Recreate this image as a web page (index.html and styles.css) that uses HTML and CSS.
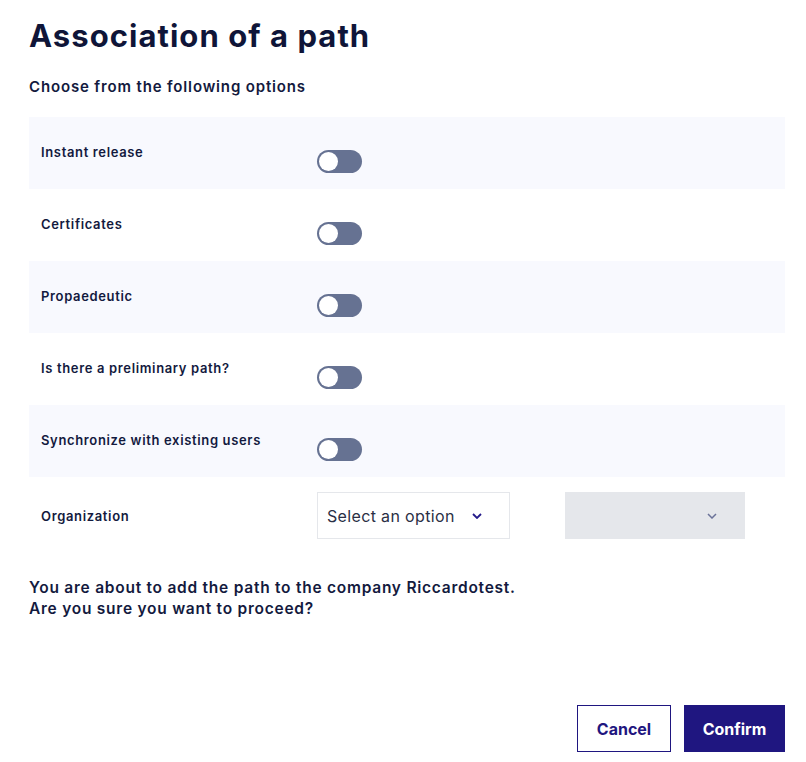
FILE: index.html
```html
<!DOCTYPE html>
<html>
<head>
<meta charset="utf-8">
<link rel="stylesheet" href="styles.css">
</head>
<body>
<div class="modal">
  <h1 class="title">Association of a path</h1>
  <p class="subtitle">Choose from the following options</p>
  <div class="options">
    <div class="row alt"><span class="label">Instant release</span><span class="toggle"><span class="knob"></span></span></div>
    <div class="row"><span class="label">Certificates</span><span class="toggle"><span class="knob"></span></span></div>
    <div class="row alt"><span class="label">Propaedeutic</span><span class="toggle"><span class="knob"></span></span></div>
    <div class="row"><span class="label">Is there a preliminary path?</span><span class="toggle"><span class="knob"></span></span></div>
    <div class="row alt"><span class="label">Synchronize with existing users</span><span class="toggle"><span class="knob"></span></span></div>
    <div class="org-row">
      <span class="label org-label">Organization</span>
      <div class="select">
        <span class="select-text">Select an option</span>
        <svg class="chev" width="10" height="6" viewBox="0 0 10 6"><path d="M1 1l4 4 4-4" fill="none" stroke="#241a8a" stroke-width="1.8"/></svg>
      </div>
      <div class="select disabled">
        <svg class="chev" width="10" height="6" viewBox="0 0 10 6"><path d="M1 1l4 4 4-4" fill="none" stroke="#6b7399" stroke-width="1.5"/></svg>
      </div>
    </div>
  </div>
  <p class="message">You are about to add the path to the company Riccardotest.<br>Are you sure you want to proceed?</p>
  <div class="actions">
    <button class="btn btn-outline">Cancel</button>
    <button class="btn btn-primary">Confirm</button>
  </div>
</div>
</body>
</html>
```
FILE: styles.css
```css
* { box-sizing: border-box; }
body {
  margin: 0;
  background: #fff;
  font-family: Inter, "Noto Sans", sans-serif;
  color: #131a3e;
}
.modal {
  padding: 16px 21px 0 29px;
}
.title {
  margin: 0;
  font-size: 31px;
  line-height: 40px;
  font-weight: 700;
  color: #0f1538;
  letter-spacing: 1.05px;
}
.subtitle {
  margin: 21px 0 0;
  font-size: 15px;
  line-height: 20px;
  font-weight: 600;
  letter-spacing: 0.85px;
}
.options {
  margin-top: 20px;
}
.row {
  height: 72px;
  display: flex;
  align-items: flex-start;
  padding-left: 12px;
}
.row.alt { background: #f8f9fe; }
.label {
  width: 276px;
  flex: none;
  font-size: 13px;
  line-height: 18px;
  font-weight: 600;
  padding-top: 26px;
  letter-spacing: 0.65px;
}
.toggle {
  margin-top: 33px;
  width: 45px;
  height: 23px;
  border-radius: 12px;
  background: #667292;
  display: flex;
  align-items: center;
  padding-left: 2px;
}
.knob {
  width: 19px;
  height: 19px;
  border-radius: 50%;
  background: #fff;
}
.org-row {
  display: flex;
  align-items: center;
  padding: 15px 0 15px 12px;
}
.org-label { padding-top: 0; }
.select {
  width: 193px;
  height: 47px;
  border: 1px solid #e5e7eb;
  display: flex;
  align-items: center;
  padding-left: 9px;
  background: #fff;
}
.select-text {
  font-size: 16px;
  font-weight: 400;
  color: #2a2f45;
  width: 145px;
  letter-spacing: 0.35px;
}
.select.disabled {
  width: 180px;
  margin-left: 55px;
  background: #e5e7eb;
  border-color: #e5e7eb;
  justify-content: flex-end;
  padding-right: 27px;
}
.message {
  margin: 23px 0 0 0;
  font-size: 15.5px;
  line-height: 21px;
  font-weight: 600;
  letter-spacing: 0.75px;
}
.actions {
  margin-top: 86px;
  display: flex;
  justify-content: flex-end;
  gap: 13px;
}
.btn {
  height: 47px;
  font-family: inherit;
  font-size: 16px;
  font-weight: 700;
  border-radius: 0;
  cursor: pointer;
}
.btn-outline {
  width: 94px;
  background: #fff;
  border: 1.5px solid #1f1680;
  color: #1f1680;
}
.btn-primary {
  width: 101px;
  background: #1f1680;
  border: 1px solid #1f1680;
  color: #fff;
}
```
